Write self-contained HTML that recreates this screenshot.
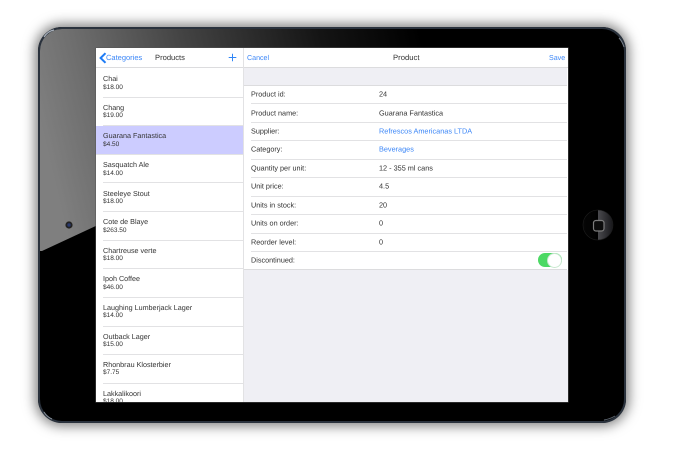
<!DOCTYPE html>
<html><head><meta charset="utf-8">
<style>
html,body{margin:0;padding:0;background:#fff;width:680px;height:450px;overflow:hidden}
body{position:relative;font-family:"Liberation Sans",sans-serif;color:#333;text-rendering:geometricPrecision}
.a{position:absolute}
.t{position:absolute;white-space:nowrap;filter:blur(.2px)}
#dev{left:38px;top:27px;width:588px;height:396px;border-radius:24px;background:#000;box-shadow:0 0 12px 3px rgba(0,0,0,.5)}
#screen{left:96px;top:48px;width:472px;height:354px;background:#fff;overflow:hidden;box-shadow:0 0 0 .5px #555}
.n{font-size:7.2px;line-height:10px;left:7px;color:#333}
.p{font-size:6.5px;line-height:8px;left:7px;color:#333;transform:translateY(1px)}
.l{font-size:7.25px;line-height:10px;left:155px;color:#333;transform:translateY(.5px)}
.v{font-size:7.3px;line-height:10px;left:283px;color:#333;transform:translateY(.5px)}
.b{color:#3b86f7}
.sep{position:absolute;height:1px;background:#e2e2e4}
</style></head><body>
<div class="a" id="dev"></div>
<svg class="a" style="left:0;top:0" width="680" height="450" viewBox="0 0 680 450">
<defs>
<linearGradient id="sh" gradientUnits="userSpaceOnUse" x1="40" y1="120" x2="420" y2="30">
<stop offset="0" stop-color="#7f7f7f"/><stop offset=".13" stop-color="#6e6e6e"/><stop offset=".4" stop-color="#444"/><stop offset=".75" stop-color="#141414"/><stop offset="1" stop-color="#000"/>
</linearGradient>
<linearGradient id="hb" x1="0" x2="1" y1="0" y2="0"><stop offset="0" stop-color="#060606"/><stop offset=".5" stop-color="#000"/><stop offset=".5" stop-color="#4a4a4e"/><stop offset="1" stop-color="#17171a"/></linearGradient>
</defs>
<path d="M40 251V50Q40 29 62 29H520L42 251Z" fill="url(#sh)"/>
<rect x="39" y="28" width="586" height="394" rx="23" fill="none" stroke="#2a323d" stroke-width="2"/>
<path d="M44 37Q48 31 54 30" fill="none" stroke="#aab2bc" stroke-width="1.2"/>
<path d="M619 38Q622 41 624 47" fill="none" stroke="#7a828c" stroke-width="1"/>
<path d="M44 412Q47 417 52 419" fill="none" stroke="#8a929c" stroke-width="1"/>
<path d="M604 420Q610 419 615 416" fill="none" stroke="#5a626c" stroke-width="1"/>
<circle cx="69" cy="225" r="3.6" fill="#222"/><circle cx="69" cy="225" r="1.7" fill="#2a3a70"/>
<circle cx="598" cy="225" r="15" fill="url(#hb)" stroke="#1c1c1c" stroke-width=".6"/>
<rect x="593.5" y="220.5" width="10.5" height="10.5" rx="2.5" fill="#0c0c0c" stroke="#7c7c7c" stroke-width="1.2"/>
</svg>
<div class="a" id="screen">
 <!-- master -->
 <svg class="a" style="left:2px;top:3px" width="10" height="14" viewBox="0 0 10 14"><path d="M7.5 2.2L2.6 7L7.5 11.8" fill="none" stroke="#1f7cf5" stroke-width="2"/></svg>
 <div class="t b" style="left:10px;top:5px;font-size:7.5px;line-height:10px">Categories</div>
 <div class="t" style="left:59px;top:5px;font-size:7.6px;line-height:10px">Products</div>
 <svg class="a" style="left:132px;top:5px" width="10" height="10" viewBox="0 0 10 10"><path d="M4.5 .7V8.3M.7 4.5H8.3" stroke="#2f86f7" stroke-width="1"/></svg>
 <div class="a" style="left:0;top:19px;width:472px;height:1px;background:#dcdcde"></div>
 <div class="a" style="left:0;top:78px;width:147px;height:29px;background:#ccccff"></div>

 <div class="t n" style="top:26px">Chai</div><div class="t p" style="top:35px">$18.00</div>
 <div class="sep" style="left:7px;top:49px;width:140px"></div>
 <div class="t n" style="top:55px">Chang</div><div class="t p" style="top:63px">$19.00</div>
 <div class="sep" style="left:7px;top:77px;width:140px"></div>
 <div class="t n" style="top:83px">Guarana Fantastica</div><div class="t p" style="top:92px">$4.50</div>
 <div class="sep" style="left:0;top:106px;width:147px"></div>
 <div class="t n" style="top:112px">Sasquatch Ale</div><div class="t p" style="top:121px">$14.00</div>
 <div class="sep" style="left:7px;top:134px;width:140px"></div>
 <div class="t n" style="top:141px">Steeleye Stout</div><div class="t p" style="top:149px">$18.00</div>
 <div class="sep" style="left:7px;top:163px;width:140px"></div>
 <div class="t n" style="top:169px">Cote de Blaye</div><div class="t p" style="top:178px">$263.50</div>
 <div class="sep" style="left:7px;top:192px;width:140px"></div>
 <div class="t n" style="top:198px">Chartreuse verte</div><div class="t p" style="top:206px">$18.00</div>
 <div class="sep" style="left:7px;top:220px;width:140px"></div>
 <div class="t n" style="top:226px">Ipoh Coffee</div><div class="t p" style="top:235px">$46.00</div>
 <div class="sep" style="left:7px;top:249px;width:140px"></div>
 <div class="t n" style="top:255px">Laughing Lumberjack Lager</div><div class="t p" style="top:263px">$14.00</div>
 <div class="sep" style="left:7px;top:278px;width:140px"></div>
 <div class="t n" style="top:284px">Outback Lager</div><div class="t p" style="top:292px">$15.00</div>
 <div class="sep" style="left:7px;top:306px;width:140px"></div>
 <div class="t n" style="top:312px">Rhonbrau Klosterbier</div><div class="t p" style="top:320px">$7.75</div>
 <div class="sep" style="left:7px;top:335px;width:140px"></div>
 <div class="t n" style="top:341px">Lakkalikoori</div><div class="t p" style="top:349px">$18.00</div>

 <!-- detail -->
 <div class="a" style="left:147px;top:0;width:1px;height:354px;background:#e2e2e4"></div>
 <div class="t b" style="left:151px;top:5px;font-size:7.1px;line-height:10px">Cancel</div>
 <div class="t" style="left:297px;top:5px;font-size:7.7px;line-height:10px">Product</div>
 <div class="t b" style="left:453px;top:5px;font-size:7.1px;line-height:10px">Save</div>
 <div class="a" style="left:148px;top:20px;width:323px;height:18px;background:#efeff4"></div>
 <div class="a" style="left:148px;top:222px;width:324px;height:132px;background:#efeff4"></div>
 <div class="a" style="left:148px;top:37px;width:323px;height:1px;background:#dcdcde"></div>
 <div class="a" style="left:148px;top:221px;width:323px;height:1px;background:#dcdcde"></div>
 <div class="sep" style="left:155px;top:55px;width:316px"></div>
 <div class="sep" style="left:155px;top:74px;width:316px"></div>
 <div class="sep" style="left:155px;top:92px;width:316px"></div>
 <div class="sep" style="left:155px;top:111px;width:316px"></div>
 <div class="sep" style="left:155px;top:129px;width:316px"></div>
 <div class="sep" style="left:155px;top:148px;width:316px"></div>
 <div class="sep" style="left:155px;top:166px;width:316px"></div>
 <div class="sep" style="left:155px;top:185px;width:316px"></div>
 <div class="sep" style="left:155px;top:203px;width:316px"></div>

 <div class="t l" style="top:41px">Product id:</div><div class="t v" style="top:41px">24</div>
 <div class="t l" style="top:60px">Product name:</div><div class="t v" style="top:60px">Guarana Fantastica</div>
 <div class="t l" style="top:78px">Supplier:</div><div class="t v b" style="top:78px">Refrescos Americanas LTDA</div>
 <div class="t l" style="top:96px">Category:</div><div class="t v b" style="top:96px">Beverages</div>
 <div class="t l" style="top:115px">Quantity per unit:</div><div class="t v" style="top:115px">12 - 355 ml cans</div>
 <div class="t l" style="top:133px">Unit price:</div><div class="t v" style="top:133px">4.5</div>
 <div class="t l" style="top:152px">Units in stock:</div><div class="t v" style="top:152px">20</div>
 <div class="t l" style="top:170px">Units on order:</div><div class="t v" style="top:170px">0</div>
 <div class="t l" style="top:189px">Reorder level:</div><div class="t v" style="top:189px">0</div>
 <div class="t l" style="top:207px">Discontinued:</div>
 <div class="a" style="left:442px;top:205px;width:24px;height:14px;border-radius:7px;background:#4cd964"></div>
 <div class="a" style="left:451px;top:205px;width:13px;height:13px;border-radius:50%;background:#fff;border:.5px solid #c8e8cf"></div>
</div>
</body></html>
